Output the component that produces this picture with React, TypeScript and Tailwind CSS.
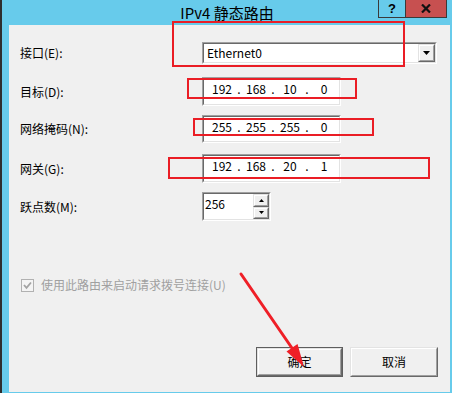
import React from "react";

const font = { fontFamily: '"Noto Sans CJK SC", "Noto Sans", sans-serif' };

const Sunken = ({ className = "", children }: { className?: string; children?: React.ReactNode }) => (
  <div className={"border border-t-[#a0a0a0] border-l-[#a0a0a0] border-r-white border-b-white " + className}>
    <div className="h-full w-full border border-t-[#696969] border-l-[#696969] border-r-[#e3e3e3] border-b-[#e3e3e3] bg-white flex">
      {children}
    </div>
  </div>
);

const Raised = ({ className = "", children }: { className?: string; children?: React.ReactNode }) => (
  <div className={"border border-t-[#e3e3e3] border-l-[#e3e3e3] border-r-[#696969] border-b-[#696969] " + className}>
    <div className="h-full w-full border border-t-white border-l-white border-r-[#a0a0a0] border-b-[#a0a0a0] bg-[#f0f0f0] flex items-center justify-center">
      {children}
    </div>
  </div>
);

const IpField = ({ parts }: { parts: string[] }) => (
  <Sunken className="w-[139px] h-full">
    <div className="flex pl-[4px] pt-[2px] leading-[16px] text-black">
      {parts.map((p, i) => (
        <React.Fragment key={"oct" + i}>
          <span className="w-[28px] text-center">{p}</span>
          {i < 3 && <span className="w-[6px] text-center">.</span>}
        </React.Fragment>
      ))}
    </div>
  </Sunken>
);

const Label = ({ children }: { children: React.ReactNode }) => (
  <div className="w-[182px] text-black">{children}</div>
);

const Tri = ({ down = true, w = 7, h = 4 }: { down?: boolean; w?: number; h?: number }) => (
  <svg width={w} height={h} viewBox={`0 0 ${w} ${h}`}>
    <polygon points={down ? `0,0 ${w},0 ${w / 2},${h}` : `0,${h} ${w},${h} ${w / 2},0`} fill="#000" />
  </svg>
);

export default function App() {
  return (
    <div className="w-[452px] h-[393px] relative overflow-hidden bg-[#67cbeb] flex flex-col border-l-2 border-[#2e2e2e]" style={font}>
      {/* title bar */}
      <div className="h-[25px] grid grid-cols-[1fr_auto_1fr] shrink-0">
        <div />
        <div className="text-[15px] leading-[25px] text-black pt-[0px]">IPv4 静态路由</div>
        <div className="flex justify-end items-start pr-[5px]">
          <div className="w-[27px] h-[18px] border-l border-b border-[#3a3a3a] flex items-center justify-center text-[13px] font-bold leading-none text-black" style={{ fontFamily: '"Liberation Sans", sans-serif' }}>?</div>
          <div className="w-[42px] h-[18px] bg-[#c75050] border-x border-b border-[#3a3a3a] flex items-center justify-center">
            <svg width="10" height="9" viewBox="0 0 10 9">
              <path d="M1 0.5 L9 8.5 M9 0.5 L1 8.5" stroke="#111" strokeWidth="2.2" />
            </svg>
          </div>
        </div>
      </div>

      {/* client area */}
      <div className="flex-1 ml-[7px] mr-[2px] mb-[1px] bg-[#f0f0f0] flex flex-col pl-[11px] pt-[17px] pr-[12px] pb-[15px] text-[12px]">
        <div className="flex items-center h-[22px]">
          <Label>接口(E):</Label>
          <Sunken className="w-[235px] h-full">
            <div className="flex-1 flex items-center pl-[3px] text-black leading-none">Ethernet0</div>
            <Raised className="w-[17px] h-full">
              <Tri />
            </Raised>
          </Sunken>
        </div>

        <div className="flex items-center h-[29px] mt-[13px]">
          <Label>目标(D):</Label>
          <IpField parts={["192", "168", "10", "0"]} />
        </div>

        <div className="flex items-center h-[28px] mt-[9px]">
          <Label>网络掩码(N):</Label>
          <IpField parts={["255", "255", "255", "0"]} />
        </div>

        <div className="flex items-center h-[29px] mt-[11px]">
          <Label>网关(G):</Label>
          <IpField parts={["192", "168", "20", "1"]} />
        </div>

        <div className="flex items-center h-[29px] mt-[9px]">
          <Label>跃点数(M):</Label>
          <Sunken className="w-[69px] h-full">
            <div className="flex-1 pl-[1px] pt-[2px] leading-[16px] text-black">256</div>
            <div className="w-[16px] flex flex-col">
              <Raised className="flex-1">
                <Tri down={false} w={5} h={3} />
              </Raised>
              <Raised className="flex-1">
                <Tri w={5} h={3} />
              </Raised>
            </div>
          </Sunken>
        </div>

        <div className="flex items-center h-[16px] mt-[56px] pl-[1px]">
          <div className="w-[13px] h-[13px] border border-[#b1b1b1] bg-[#f4f4f4] flex items-center justify-center">
            <svg width="9" height="9" viewBox="0 0 9 9">
              <polyline points="1,4 3.5,6.8 8,1.5" fill="none" stroke="#a3a3a3" strokeWidth="1.8" />
            </svg>
          </div>
          <span className="ml-[7px] text-[#a0a0a0]">使用此路由来启动请求拨号连接(U)</span>
        </div>

        <div className="flex-1" />

        <div className="flex justify-end gap-[7px]">
          <div className="w-[87px] h-[30px] border border-[#5e5e5e]">
            <Raised className="h-full text-black">确定</Raised>
          </div>
          <Raised className="w-[88px] h-[30px] text-black">取消</Raised>
        </div>
      </div>

      {/* red annotations drawn over the dialog */}
      <div className="absolute left-[170px] top-[21px] w-[233px] h-[46px] border-2 border-[#ea1d25]" />
      <div className="absolute left-[185px] top-[78px] w-[170px] h-[21px] border-2 border-[#ea1d25]" />
      <div className="absolute left-[191px] top-[118px] w-[181px] h-[18px] border-2 border-[#ea1d25]" />
      <div className="absolute left-[166px] top-[157px] w-[262px] h-[22px] border-2 border-[#ea1d25]" />
      <svg className="absolute left-0 top-0 pointer-events-none" width="452" height="393" viewBox="0 0 452 393">
        <line x1="239" y1="274" x2="292" y2="351" stroke="#ef1f27" strokeWidth="3" strokeLinecap="round" />
        <polygon points="302,367 284.5,351.5 295.5,344" fill="#ef1f27" />
      </svg>
    </div>
  );
}
